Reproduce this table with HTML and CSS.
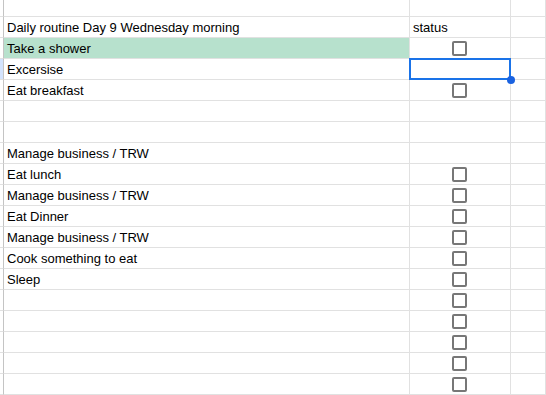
FILE: index.html
```html
<!DOCTYPE html>
<html lang="en">
<head>
<meta charset="utf-8">
<title>Daily routine</title>
<link rel="stylesheet" href="styles.css">
</head>
<body>
<div class="sheet">
  <!-- partially scrolled-off top row -->
  <div class="rh"></div><div class="a"></div><div class="b"></div><div class="c"></div>

  <div class="rh"></div><div class="a">Daily routine Day 9 Wednesday morning</div><div class="b">status</div><div class="c"></div>
  <div class="rh"></div><div class="a done">Take a shower</div><div class="b"><span class="box"></span></div><div class="c"></div>
  <div class="rh active"></div><div class="a">Excersise</div><div class="b selected"><span class="sel"></span><span class="handle"></span></div><div class="c"></div>
  <div class="rh"></div><div class="a">Eat breakfast</div><div class="b"><span class="box"></span></div><div class="c"></div>
  <div class="rh"></div><div class="a"></div><div class="b"></div><div class="c"></div>
  <div class="rh"></div><div class="a"></div><div class="b"></div><div class="c"></div>
  <div class="rh"></div><div class="a">Manage business / TRW</div><div class="b"></div><div class="c"></div>
  <div class="rh"></div><div class="a">Eat lunch</div><div class="b"><span class="box"></span></div><div class="c"></div>
  <div class="rh"></div><div class="a">Manage business / TRW</div><div class="b"><span class="box"></span></div><div class="c"></div>
  <div class="rh"></div><div class="a">Eat Dinner</div><div class="b"><span class="box"></span></div><div class="c"></div>
  <div class="rh"></div><div class="a">Manage business / TRW</div><div class="b"><span class="box"></span></div><div class="c"></div>
  <div class="rh"></div><div class="a">Cook something to eat</div><div class="b"><span class="box"></span></div><div class="c"></div>
  <div class="rh"></div><div class="a">Sleep</div><div class="b"><span class="box"></span></div><div class="c"></div>
  <div class="rh"></div><div class="a"></div><div class="b"><span class="box"></span></div><div class="c"></div>
  <div class="rh"></div><div class="a"></div><div class="b"><span class="box"></span></div><div class="c"></div>
  <div class="rh"></div><div class="a"></div><div class="b"><span class="box"></span></div><div class="c"></div>
  <div class="rh"></div><div class="a"></div><div class="b"><span class="box"></span></div><div class="c"></div>
  <div class="rh"></div><div class="a"></div><div class="b"><span class="box"></span></div><div class="c"></div>
</div>
</body>
</html>
```

FILE: styles.css
```css
html, body {
  margin: 0;
  padding: 0;
  background: #ffffff;
  overflow: hidden;
}

.sheet {
  display: grid;
  grid-template-columns: 4px 406px 101px 1fr;
  grid-template-rows: 17px repeat(18, 21px);
  width: 546px;
  height: 395px;
  font-family: "Liberation Sans", Arial, sans-serif;
  font-size: 13px;
  line-height: 15px;
  color: #000000;
}

.sheet > div {
  box-sizing: border-box;
  border-right: 1px solid #e1e1e1;
  border-bottom: 1px solid #e1e1e1;
  min-width: 0;
}

/* row header strip at the left edge */
.sheet > .rh {
  border-right-color: #c4c4c4;
  background: #ffffff;
}

.sheet > .rh.active {
  background: #d3e3fd;
}

.a {
  display: flex;
  align-items: flex-end;
  padding: 0 3px 2px 3px;
  white-space: nowrap;
  overflow: hidden;
}

.a.done {
  background: #b7e1cd;
}

.b {
  position: relative;
  display: flex;
  align-items: flex-end;
  padding: 0 3px 2px 3px;
}

.b:has(.box) {
  align-items: center;
  justify-content: center;
  padding: 0;
}

.box {
  display: block;
  width: 15px;
  height: 15px;
  box-sizing: border-box;
  border: 2px solid #777777;
  border-radius: 2px;
  background: #ffffff;
  margin-left: -1px;
}

/* active cell outline with fill handle */
.sel {
  position: absolute;
  top: -1px;
  left: -1px;
  right: -1px;
  bottom: -1px;
  border: 2px solid #1a73e8;
  z-index: 2;
}

.handle {
  position: absolute;
  right: -5px;
  bottom: -5px;
  width: 8px;
  height: 8px;
  border-radius: 50%;
  background: #1a62e0;
  z-index: 3;
}
```
